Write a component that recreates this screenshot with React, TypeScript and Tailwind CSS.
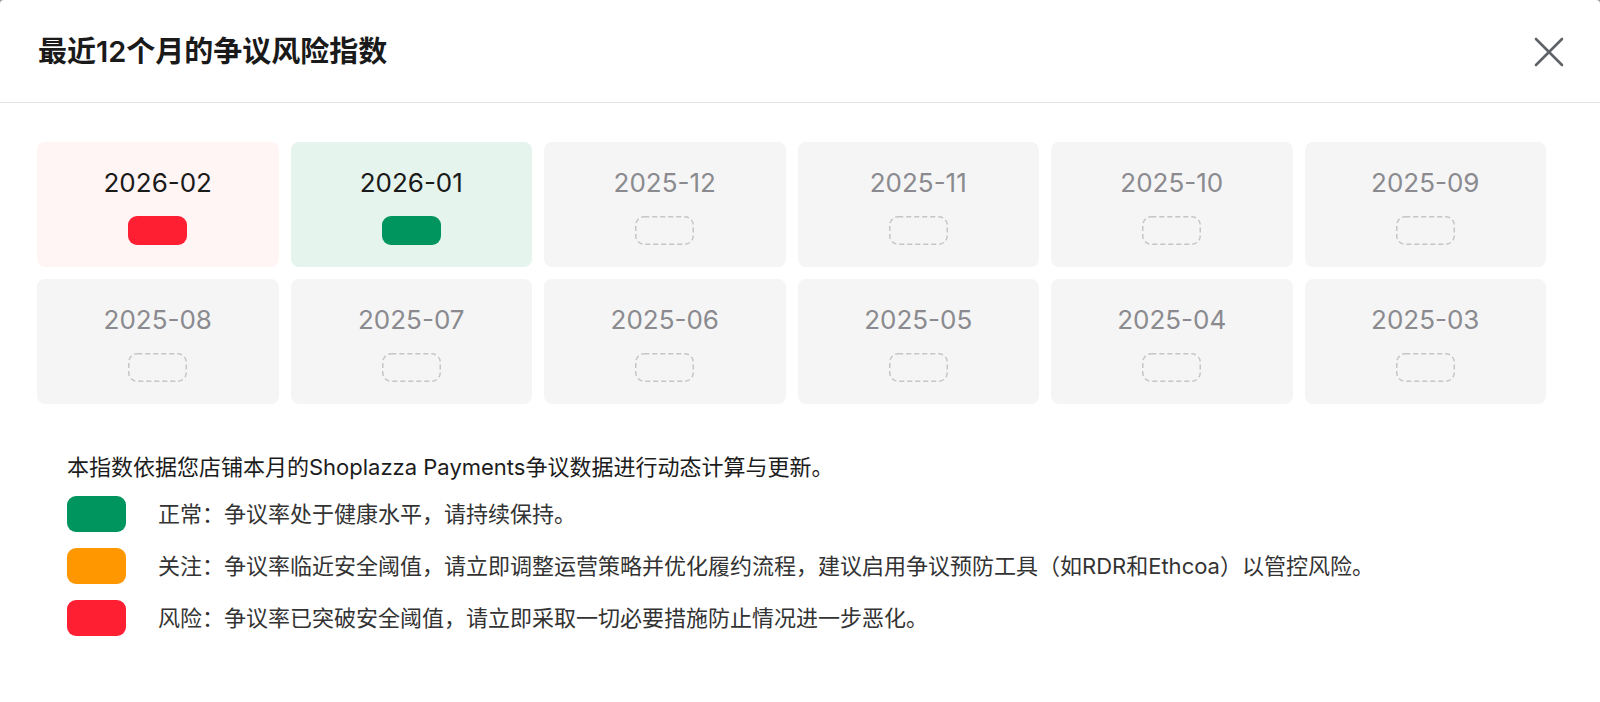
import React from "react";

type Estado = "risco" | "normal" | "vazio";

const meses: { mes: string; estado: Estado }[] = [
  { mes: "2026-02", estado: "risco" },
  { mes: "2026-01", estado: "normal" },
  { mes: "2025-12", estado: "vazio" },
  { mes: "2025-11", estado: "vazio" },
  { mes: "2025-10", estado: "vazio" },
  { mes: "2025-09", estado: "vazio" },
  { mes: "2025-08", estado: "vazio" },
  { mes: "2025-07", estado: "vazio" },
  { mes: "2025-06", estado: "vazio" },
  { mes: "2025-05", estado: "vazio" },
  { mes: "2025-04", estado: "vazio" },
  { mes: "2025-03", estado: "vazio" },
];

const legenda = [
  { cor: "bg-[#00945f]", texto: "正常：争议率处于健康水平，请持续保持。" },
  {
    cor: "bg-[#ff9800]",
    texto:
      "关注：争议率临近安全阈值，请立即调整运营策略并优化履约流程，建议启用争议预防工具（如RDR和Ethcoa）以管控风险。",
  },
  { cor: "bg-[#ff1f33]", texto: "风险：争议率已突破安全阈值，请立即采取一切必要措施防止情况进一步恶化。" },
];

function CartaoMes({ mes, estado }: { mes: string; estado: Estado }) {
  const fundo =
    estado === "risco" ? "bg-[#fff5f4]" : estado === "normal" ? "bg-[#e5f4ed]" : "bg-[#f5f5f5]";
  const corTexto = estado === "vazio" ? "text-[#8a8a8f]" : "text-[#1a1a1a]";

  return (
    <div className={`flex h-[125px] flex-col items-center rounded-lg pt-[23px] ${fundo}`}>
      <span className={`text-[26px] leading-[36px] ${corTexto}`}>{mes}</span>
      {estado === "vazio" ? (
        <svg className="mt-[15px]" width="59" height="29" viewBox="0 0 59 29">
          <rect
            x="0.75"
            y="0.75"
            width="57.5"
            height="27.5"
            rx="8.5"
            fill="none"
            stroke="#c6c6c6"
            strokeWidth="1.5"
            strokeDasharray="5 3"
          />
        </svg>
      ) : (
        <div
          className={`mt-[15px] h-[29px] w-[59px] rounded-[9px] ${
            estado === "risco" ? "bg-[#ff1f33]" : "bg-[#00945f]"
          }`}
        />
      )}
    </div>
  );
}

export default function App() {
  return (
    <div
      className="min-h-screen bg-[#9a9a9a]"
      style={{ fontFamily: 'Inter, "Noto Sans CJK SC", sans-serif' }}
    >
      <div className="min-h-[702px] overflow-hidden rounded-t-[4px] bg-white">
        {/* Cabeçalho */}
        <div className="box-border flex h-[103px] items-center justify-between border-b border-[#e4e4e4] pl-[38px] pr-[36px] pt-[2px]">
          <h1 className="text-[29px] font-semibold leading-[40px] text-[#1a1a1a]">
            最近12个月的争议风险指数
          </h1>
          <button className="flex h-[30px] w-[30px] items-center justify-center">
            <svg width="30" height="30" viewBox="0 0 30 30">
              <path
                d="M2 2 L28 28 M28 2 L2 28"
                stroke="#5f6368"
                strokeWidth="2.6"
                strokeLinecap="round"
              />
            </svg>
          </button>
        </div>

        {/* Grade de meses */}
        <div className="pl-[37px] pt-[39px]">
          <div className="grid w-[1509px] grid-cols-6 gap-3">
            {meses.map((m) => (
              <CartaoMes key={m.mes} mes={m.mes} estado={m.estado} />
            ))}
          </div>

          {/* Legenda */}
          <div className="mt-[48px] pl-[30px]">
            <p className="text-[22px] leading-[30px] text-[#1c1c1c]">
              本指数依据您店铺本月的Shoplazza Payments争议数据进行动态计算与更新。
            </p>
            <ul className="mt-[14px] flex flex-col gap-4">
              {legenda.map((item) => (
                <li key={item.texto} className="flex h-[36px] items-center">
                  <span className={`h-[36px] w-[59px] shrink-0 rounded-[9px] ${item.cor}`} />
                  <span className="ml-[32px] text-[22px] leading-[30px] text-[#333333]">
                    {item.texto}
                  </span>
                </li>
              ))}
            </ul>
          </div>
        </div>
      </div>
    </div>
  );
}
